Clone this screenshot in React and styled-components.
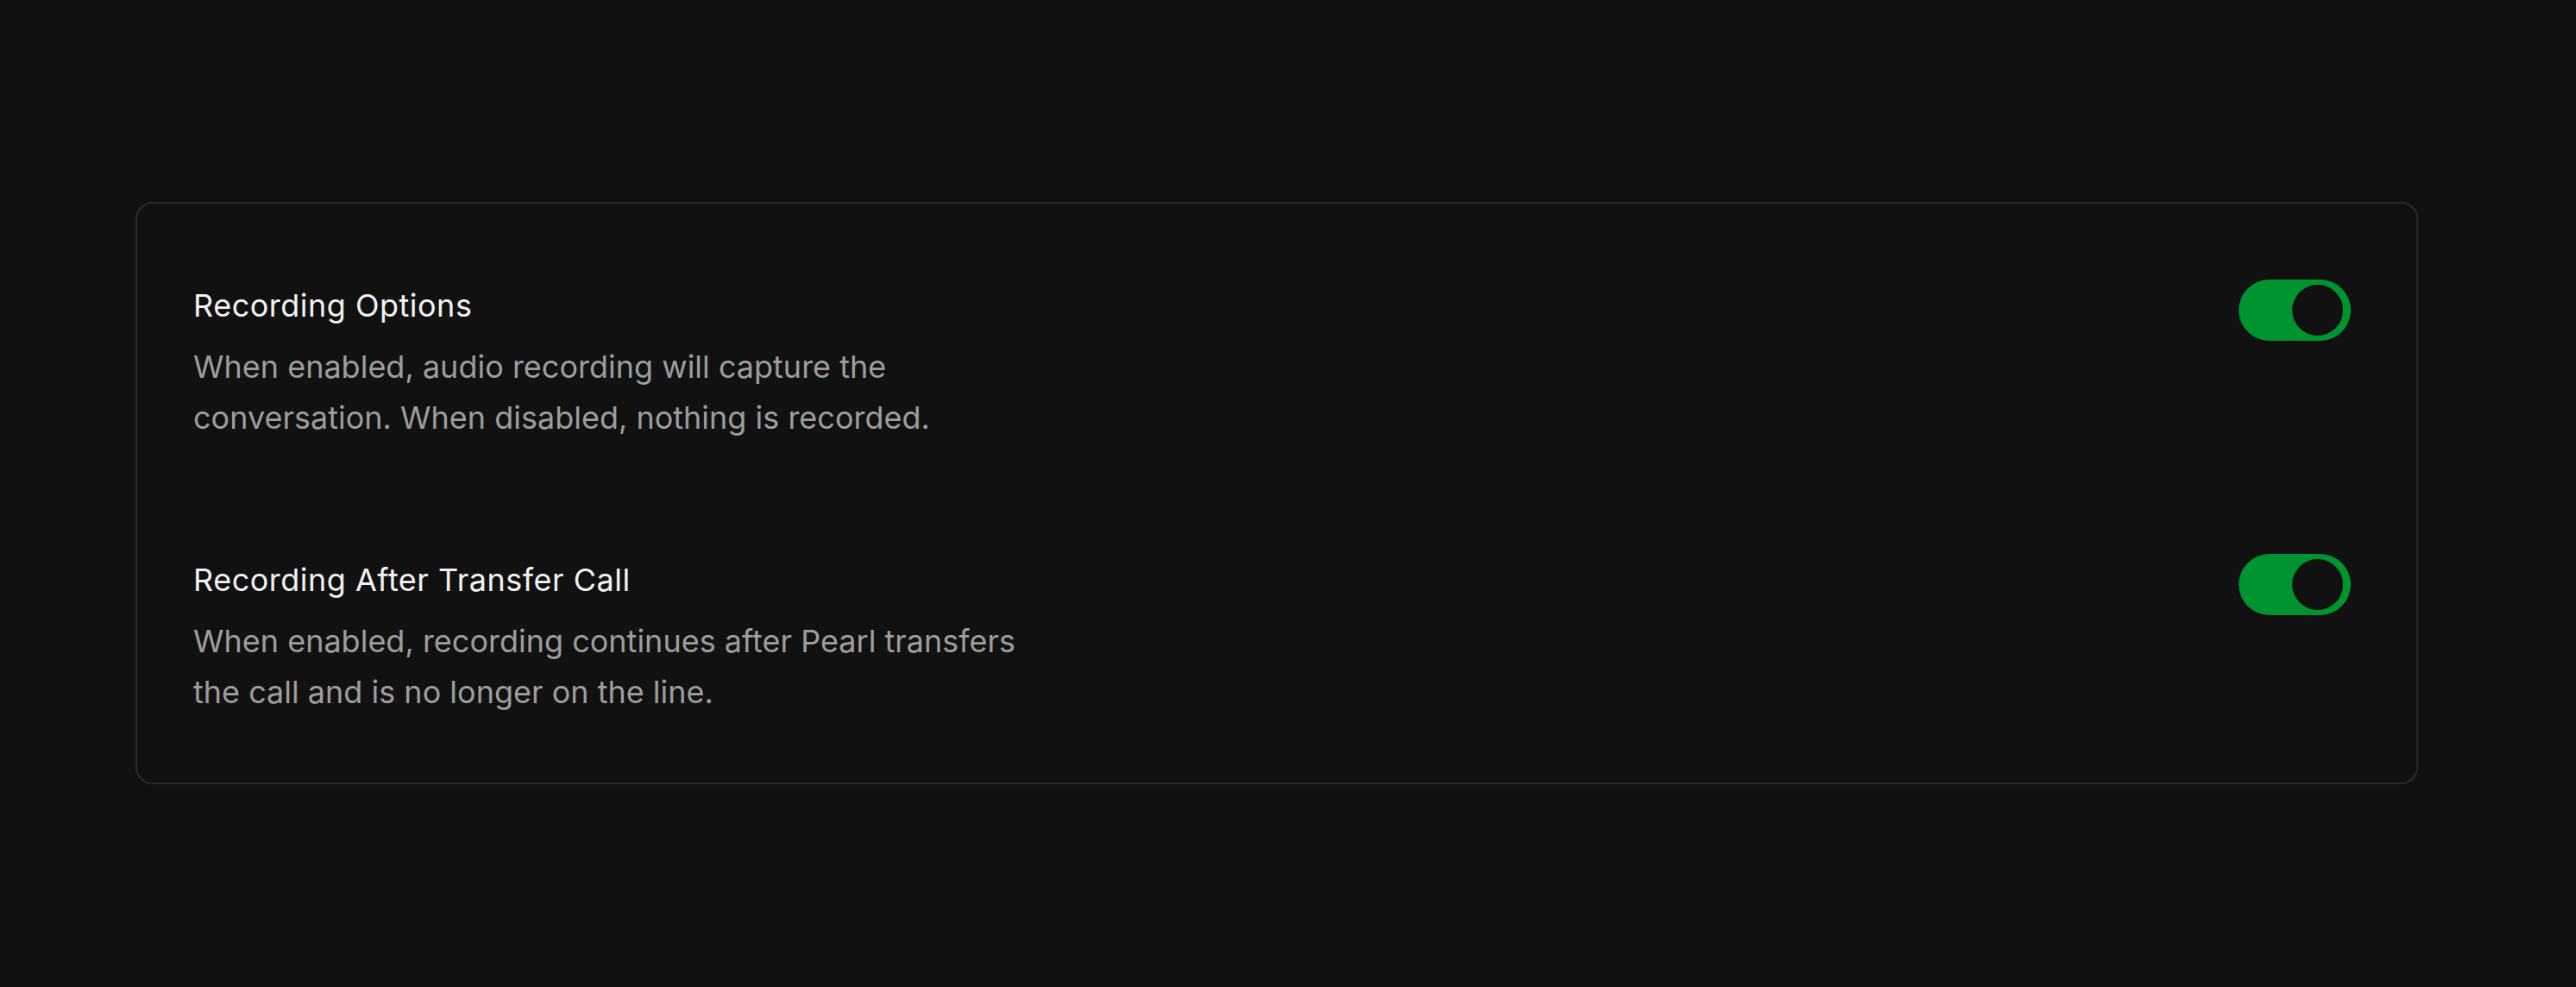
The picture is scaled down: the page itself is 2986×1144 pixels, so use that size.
import React, { useState } from "react";
import styled, { createGlobalStyle } from "styled-components";

const GlobalStyle = createGlobalStyle`
  html, body {
    margin: 0;
    padding: 0;
    background: #111111;
  }
  body {
    font-family: Inter, "Noto Sans", "Liberation Sans", sans-serif;
    -webkit-font-smoothing: antialiased;
  }
`;

const Page = styled.main`
  min-height: 1144px;
  box-sizing: border-box;
  padding: 234px 183px 0 157px;
  background: #111111;
`;

const Card = styled.section`
  box-sizing: border-box;
  border: 2px solid #2b2b2b;
  border-radius: 20px;
  background: #111111;
  padding: 88px 76px 75px 65px;
  display: flex;
  flex-direction: column;
  gap: 128px;
`;

const Row = styled.div`
  display: flex;
  justify-content: space-between;
  align-items: flex-start;
`;

const TextBlock = styled.div`
  display: flex;
  flex-direction: column;
  gap: 20px;
  padding-top: 8px;
`;

const Title = styled.h3`
  margin: 0;
  font-size: 36px;
  line-height: 44px;
  font-weight: 400;
  letter-spacing: 0.5px;
  color: #f2f2f2;
`;

const Description = styled.p`
  margin: 0;
  max-width: 985px;
  font-size: 36px;
  line-height: 59px;
  font-weight: 400;
  color: #9d9d9d;
`;

const Track = styled.button`
  position: relative;
  flex: none;
  width: 130px;
  height: 71px;
  border: none;
  padding: 0;
  border-radius: 36px;
  cursor: pointer;
  background: ${(p) => (p.$on ? "#009430" : "#3a3a3a")};
`;

const Knob = styled.span`
  position: absolute;
  top: 6px;
  left: ${(p) => (p.$on ? "62px" : "6px")};
  width: 59px;
  height: 59px;
  border-radius: 50%;
  background: #111111;
`;

const settings = [
  {
    title: "Recording Options",
    desc: "When enabled, audio recording will capture the conversation. When disabled, nothing is recorded.",
  },
  {
    title: "Recording After Transfer Call",
    desc: "When enabled, recording continues after Pearl transfers the call and is no longer on the line.",
  },
];

function Toggle({ on, onClick }) {
  return (
    <Track $on={on} onClick={onClick} role="switch" aria-checked={on}>
      <Knob $on={on} />
    </Track>
  );
}

export default function App() {
  const [state, setState] = useState([true, true]);
  return (
    <>
      <GlobalStyle />
      <Page>
        <Card>
          {settings.map((s, i) => (
            <Row key={s.title}>
              <TextBlock>
                <Title>{s.title}</Title>
                <Description>{s.desc}</Description>
              </TextBlock>
              <Toggle
                on={state[i]}
                onClick={() =>
                  setState((st) => st.map((v, j) => (j === i ? !v : v)))
                }
              />
            </Row>
          ))}
        </Card>
      </Page>
    </>
  );
}
